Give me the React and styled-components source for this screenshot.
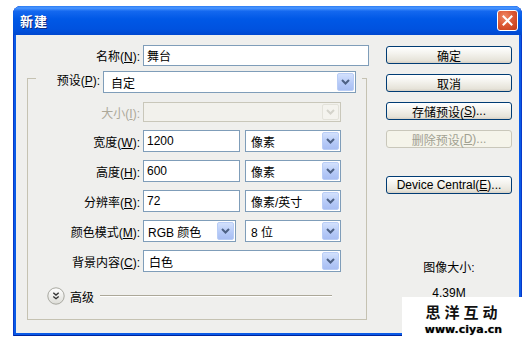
import React from 'react';
import styled, { createGlobalStyle } from 'styled-components';

const GlobalStyle = createGlobalStyle`
  body {
    margin: 0;
    background: #fff;
    font-family: "Liberation Sans", "Noto Sans CJK SC", sans-serif;
    font-size: 12px;
    color: #000;
  }
`;

const Window = styled.div`
  position: relative;
  margin: 6px 0 0 13px;
  width: 509px;
  height: 330px;
  border-radius: 8px 8px 0 0;
  overflow: hidden;
  background: #0a5ae6;
  box-shadow: inset 1px 0 0 #0838c8, inset -1px 0 0 #0838c8, inset 0 -1px 0 #00249c;
`;

const TitleBar = styled.div`
  height: 29px;
  display: flex;
  align-items: center;
  justify-content: space-between;
  padding: 0 4px 0 7px;
  background: linear-gradient(#2a7cf4 0%, #4b97ff 7%, #1468ef 18%, #0058e6 45%, #0052df 80%, #0047cf 100%);
`;

const Title = styled.span`
  color: #fff;
  font-weight: bold;
  font-size: 13px;
  font-family: "Noto Sans CJK SC", sans-serif;
  text-shadow: 1px 1px 0 #0a2a80;
  letter-spacing: 1px;
`;

const CloseButton = styled.div`
  width: 19px;
  height: 19px;
  border: 1px solid #fff;
  border-radius: 3px;
  background: radial-gradient(circle at 35% 30%, #f08a68 0%, #dd5a35 45%, #c23a18 100%);
  display: flex;
  align-items: center;
  justify-content: center;
`;

const Client = styled.div`
  margin: 0 3px;
  height: 298px;
  background: #efefed;
  display: flex;
`;

const LeftCol = styled.div`
  width: 353px;
  padding: 10px 0 0 11px;
  box-sizing: border-box;
  display: flex;
  flex-direction: column;
`;

const RightCol = styled.div`
  margin-left: 17px;
  width: 126px;
  padding-top: 11px;
  display: flex;
  flex-direction: column;
  gap: 10px;
`;

const Row = styled.div`
  display: flex;
  align-items: center;
  height: ${({ h }) => h || 22}px;
`;

const Label = styled.label`
  width: ${({ w }) => w || 112}px;
  margin-right: 3px;
  text-align: right;
  white-space: nowrap;
  color: ${({ disabled }) => (disabled ? '#aca899' : '#000')};
  u { text-decoration: underline; }
`;

const TextInput = styled.div`
  box-sizing: border-box;
  width: ${({ w }) => w}px;
  height: ${({ h }) => h || 22}px;
  border: 1px solid #7f9db9;
  background: #fff;
  padding-left: 3px;
  display: flex;
  align-items: center;
`;

const SelectBox = styled.div`
  box-sizing: border-box;
  width: ${({ w }) => w}px;
  height: ${({ h }) => h || 22}px;
  margin-left: ${({ ml }) => ml || 0}px;
  border: 1px solid ${({ disabled }) => (disabled ? '#c9c7ba' : '#7f9db9')};
  background: ${({ disabled }) => (disabled ? '#f2f1ec' : '#fff')};
  display: flex;
  align-items: center;
  padding: 1px;
`;

const SelectValue = styled.span`
  flex: 1;
  padding-left: ${({ pad }) => pad || 4}px;
  white-space: nowrap;
`;

const Arrow = styled.div`
  width: 17px;
  align-self: stretch;
  box-sizing: border-box;
  border-radius: 2px;
  border: 1px solid ${({ disabled }) => (disabled ? '#e3e2da' : '#b9cdf6')};
  background: ${({ disabled }) =>
    disabled ? '#f4f3ee' : 'linear-gradient(#d3e1fd, #b5c9f7 60%, #a9bff3)'};
  display: flex;
  align-items: center;
  justify-content: center;
`;

const GroupBox = styled.div`
  margin-top: 12px;
  width: 340px;
  height: 242px;
  box-sizing: border-box;
  border: 1px solid #c5c2b2;
  border-top: none;
  display: flex;
  flex-direction: column;
`;

const GroupHead = styled.div`
  margin-top: -7px;
  display: flex;
  height: 22px;
`;

const Seg = styled.div`
  width: ${({ w }) => (w ? `${w}px` : 'auto')};
  flex: ${({ w }) => (w ? 'none' : 1)};
  margin-top: 7px;
  margin-left: ${({ ml }) => ml || 0}px;
  align-self: flex-start;
  border-top: 1px solid #c5c2b2;
`;

const GroupRows = styled.div`
  padding-top: 9px;
  display: flex;
  flex-direction: column;
  gap: 8px;
`;

const AdvancedRow = styled.div`
  margin-top: 15px;
  height: 18px;
  padding-left: 19px;
  display: flex;
  align-items: center;
`;

const AdvancedText = styled.span`
  margin-left: 5px;
`;

const Rule = styled.div`
  margin-left: 6px;
  width: 232px;
  border-top: 1px solid #aca899;
  border-bottom: 1px solid #fff;
`;

const Button = styled.div`
  box-sizing: border-box;
  height: 18px;
  margin-top: ${({ mt }) => mt || 0}px;
  border: 1px solid ${({ disabled }) => (disabled ? '#c9c7ba' : '#003c74')};
  border-radius: 3px;
  background: ${({ disabled }) =>
    disabled ? '#f5f4ea' : 'linear-gradient(#ffffff 0%, #f4f3ee 40%, #e6e3d9 85%, #d6d0c5 100%)'};
  color: ${({ disabled }) => (disabled ? '#a1a192' : '#000')};
  display: flex;
  align-items: center;
  justify-content: center;
  white-space: nowrap;
`;

const SizeInfo = styled.div`
  margin-top: ${({ mt }) => mt}px;
  text-align: center;
  line-height: 14px;
`;

const Watermark = styled.div`
  position: absolute;
  right: -3px;
  bottom: 0;
  width: 123px;
  height: 39px;
  background: #fff;
  display: flex;
  flex-direction: column;
  align-items: center;
  justify-content: flex-end;
  gap: 4px;
`;

const MarkTitle = styled.div`
  font-family: "Noto Sans CJK SC", sans-serif;
  font-weight: bold;
  font-size: 15px;
  line-height: 17px;
  height: 17px;
  letter-spacing: 4px;
  color: #111;
`;

const MarkUrl = styled.div`
  font-family: "DejaVu Sans", sans-serif;
  font-weight: bold;
  font-size: 11px;
  line-height: 12px;
  height: 12px;
  color: #000;
  text-shadow: 0 0 1px #888;
`;

function Chevron({ disabled }) {
  return (
    <svg width="9" height="6" viewBox="0 0 9 6">
      <path d="M1 1 L4.5 4.5 L8 1" fill="none" stroke={disabled ? '#d4d3cb' : '#4d6185'} strokeWidth="2" />
    </svg>
  );
}

function Select({ w, value, disabled, ml, h, pad }) {
  return (
    <SelectBox w={w} disabled={disabled} ml={ml} h={h}>
      <SelectValue pad={pad}>{value}</SelectValue>
      <Arrow disabled={disabled}>
        <Chevron disabled={disabled} />
      </Arrow>
    </SelectBox>
  );
}

function ExpandIcon() {
  return (
    <svg width="18" height="18" viewBox="0 0 18 18">
      <defs>
        <linearGradient id="eg" x1="0" y1="0" x2="0" y2="1">
          <stop offset="0" stopColor="#ffffff" />
          <stop offset="1" stopColor="#dcdcd6" />
        </linearGradient>
      </defs>
      <circle cx="9" cy="9" r="8.2" fill="url(#eg)" stroke="#a8a8a0" />
      <path d="M6.3 5.8 L9 8 L11.7 5.8 M6.3 9.5 L9 11.7 L11.7 9.5" fill="none" stroke="#333" strokeWidth="1.4" />
    </svg>
  );
}

const Mn = ({ children }) => <u>{children}</u>;

export default function App() {
  return (
    <>
      <GlobalStyle />
      <Window>
        <TitleBar>
          <Title>新建</Title>
          <CloseButton>
            <svg width="11" height="11" viewBox="0 0 11 11">
              <path d="M1.5 1.5 L9.5 9.5 M9.5 1.5 L1.5 9.5" stroke="#fff" strokeWidth="2" strokeLinecap="square" />
            </svg>
          </CloseButton>
        </TitleBar>
        <Client>
          <LeftCol>
            <Row h={21}>
              <Label w={113}>名称(<Mn>N</Mn>):</Label>
              <TextInput w={226} h={21}>舞台</TextInput>
            </Row>
            <GroupBox>
              <GroupHead>
                <Seg w={8} />
                <Label w={64}>预设(<Mn>P</Mn>):</Label>
                <Select w={253} value="自定" pad={6} />
                <Seg ml={6} />
              </GroupHead>
              <GroupRows>
                <Row h={20}>
                  <Label disabled>大小(<Mn>I</Mn>):</Label>
                  <Select w={198} h={20} value="" disabled />
                </Row>
                <Row>
                  <Label>宽度(<Mn>W</Mn>):</Label>
                  <TextInput w={97}>1200</TextInput>
                  <Select w={96} ml={5} value="像素" />
                </Row>
                <Row>
                  <Label>高度(<Mn>H</Mn>):</Label>
                  <TextInput w={97}>600</TextInput>
                  <Select w={96} ml={5} value="像素" />
                </Row>
                <Row>
                  <Label>分辨率(<Mn>R</Mn>):</Label>
                  <TextInput w={97}>72</TextInput>
                  <Select w={96} ml={5} value="像素/英寸" />
                </Row>
                <Row>
                  <Label>颜色模式(<Mn>M</Mn>):</Label>
                  <Select w={93} value="RGB 颜色" pad={3} />
                  <Select w={96} ml={9} value="8 位" />
                </Row>
                <Row>
                  <Label>背景内容(<Mn>C</Mn>):</Label>
                  <Select w={198} value="白色" />
                </Row>
              </GroupRows>
              <AdvancedRow>
                <ExpandIcon />
                <AdvancedText>高级</AdvancedText>
                <Rule />
              </AdvancedRow>
            </GroupBox>
          </LeftCol>
          <RightCol>
            <Button>确定</Button>
            <Button>取消</Button>
            <Button>存储预设(<Mn>S</Mn>)...</Button>
            <Button disabled>删除预设(<Mn>D</Mn>)...</Button>
            <Button mt={18}>Device Central(<Mn>E</Mn>)...</Button>
            <SizeInfo mt={57}>图像大小:</SizeInfo>
            <SizeInfo mt={1}>4.39M</SizeInfo>
          </RightCol>
        </Client>
        <Watermark>
          <MarkTitle>思洋互动</MarkTitle>
          <MarkUrl>www.ciya.cn</MarkUrl>
        </Watermark>
      </Window>
    </>
  );
}
